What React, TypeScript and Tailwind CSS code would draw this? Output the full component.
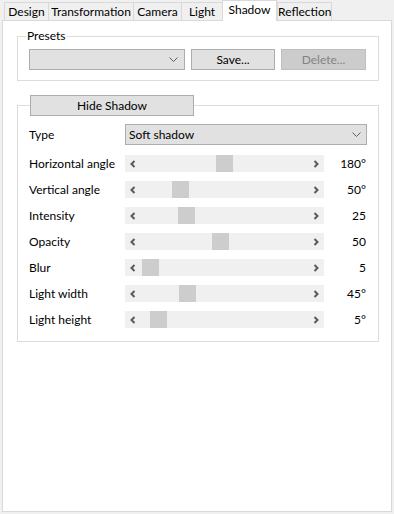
import React from 'react'

const tabs = [
  { label: 'Design', w: 'w-[44px]' },
  { label: 'Transformation', w: 'w-[85px]' },
  { label: 'Camera', w: 'w-[48px]' },
  { label: 'Light', w: 'w-[41px]' },
  { label: 'Shadow', w: 'w-[55px]', active: true },
  { label: 'Reflection', w: 'w-[55px]' },
]

const sliders = [
  { label: 'Horizontal angle', thumb: 91, value: '180°' },
  { label: 'Vertical angle', thumb: 47, value: '50°' },
  { label: 'Intensity', thumb: 53, value: '25' },
  { label: 'Opacity', thumb: 87, value: '50' },
  { label: 'Blur', thumb: 17, value: '5' },
  { label: 'Light width', thumb: 54, value: '45°' },
  { label: 'Light height', thumb: 25, value: '5°' },
]

const Chevron = () => (
  <svg width="9" height="5" viewBox="0 0 9 5" className="shrink-0">
    <path d="M0.5 0.5 L4.5 4.5 L8.5 0.5" fill="none" stroke="#606060" strokeWidth="1" />
  </svg>
)

const Arrow = ({ dir }: { dir: 'left' | 'right' }) => (
  <svg width="6" height="8" viewBox="0 0 6 8">
    <path
      d={dir === 'left' ? 'M4.5 1 L1.5 4 L4.5 7' : 'M1.5 1 L4.5 4 L1.5 7'}
      fill="none"
      stroke="#5a5a5a"
      strokeWidth="2"
    />
  </svg>
)

function Slider({ label, thumb, value }: { label: string; thumb: number; value: string }) {
  return (
    <div className="flex items-center h-[17px]">
      <span className="w-[96px] leading-[17px]">{label}</span>
      <div className="relative w-[199px] h-[17px] bg-[#f0f0f0] flex items-center justify-between px-[5px]">
        <Arrow dir="left" />
        <div className="absolute top-0 w-[17px] h-[17px] bg-[#cdcdcd]" style={{ left: thumb }} />
        <Arrow dir="right" />
      </div>
      <span className="w-[42px] text-right leading-[17px]">{value}</span>
    </div>
  )
}

export default function App() {
  return (
    <div className="w-[394px] h-[514px] bg-[#f0f0f0] text-[12px] text-black font-['Lato','Segoe_UI',sans-serif]">
      {/* Tab strip */}
      <div className="flex items-end h-[20px] pl-[4px]">
        {tabs.map((t, i) =>
          t.active ? (
            <div
              key={t.label}
              className={`${t.w} h-[21px] -mb-[1px] relative z-10 bg-white border-t border-l border-r border-[#d9d9d9] text-center leading-[17px]`}
            >
              {t.label}
            </div>
          ) : (
            <div
              key={t.label}
              className={`${t.w} h-[18px] bg-[#f0f0f0] border-t border-l border-[#d9d9d9] text-center leading-[17px] ${
                i === tabs.length - 1 ? 'border-r' : ''
              }`}
            >
              {t.label}
            </div>
          )
        )}
      </div>

      {/* Panel */}
      <div className="ml-[2px] w-[390px] h-[492px] bg-white border border-[#d9d9d9] pt-[7px]">
        <fieldset className="ml-[14px] w-[362px] border border-[#dcdcdc]">
          <legend className="ml-[8px] px-[1px] leading-[16px]">Presets</legend>
          <div className="flex items-center mt-[5px] px-[11px] pb-[10px]">
            <div className="w-[156px] h-[21px] bg-[#e1e1e1] border border-[#adadad] flex items-center justify-end pr-[6px]">
              <Chevron />
            </div>
            <button className="ml-[6px] w-[84px] h-[21px] bg-[#e1e1e1] border border-[#adadad] leading-[19px]">
              Save...
            </button>
            <button className="ml-[6px] w-[85px] h-[21px] bg-[#cccccc] border border-[#bfbfbf] text-[#838383] leading-[19px]">
              Delete...
            </button>
          </div>
        </fieldset>

        <fieldset className="mt-[14px] ml-[14px] w-[362px] border border-[#dcdcdc]">
          <legend className="ml-[12px]">
            <button className="block w-[164px] h-[21px] bg-[#e1e1e1] border border-[#adadad] leading-[19px]">
              Hide Shadow
            </button>
          </legend>
          <div className="px-[11px] pb-[13px]">
            <div className="flex items-center mt-[8px] h-[21px]">
              <span className="w-[96px] pt-[1px]">Type</span>
              <div className="w-[242px] h-[21px] bg-[#e1e1e1] border border-[#adadad] flex items-center justify-between pl-[3px] pr-[5px]">
                <span className="leading-[19px]">Soft shadow</span>
                <Chevron />
              </div>
            </div>
            <div className="flex flex-col gap-[9px] mt-[10px]">
              {sliders.map((s) => (
                <Slider key={s.label} {...s} />
              ))}
            </div>
          </div>
        </fieldset>
      </div>
    </div>
  )
}
